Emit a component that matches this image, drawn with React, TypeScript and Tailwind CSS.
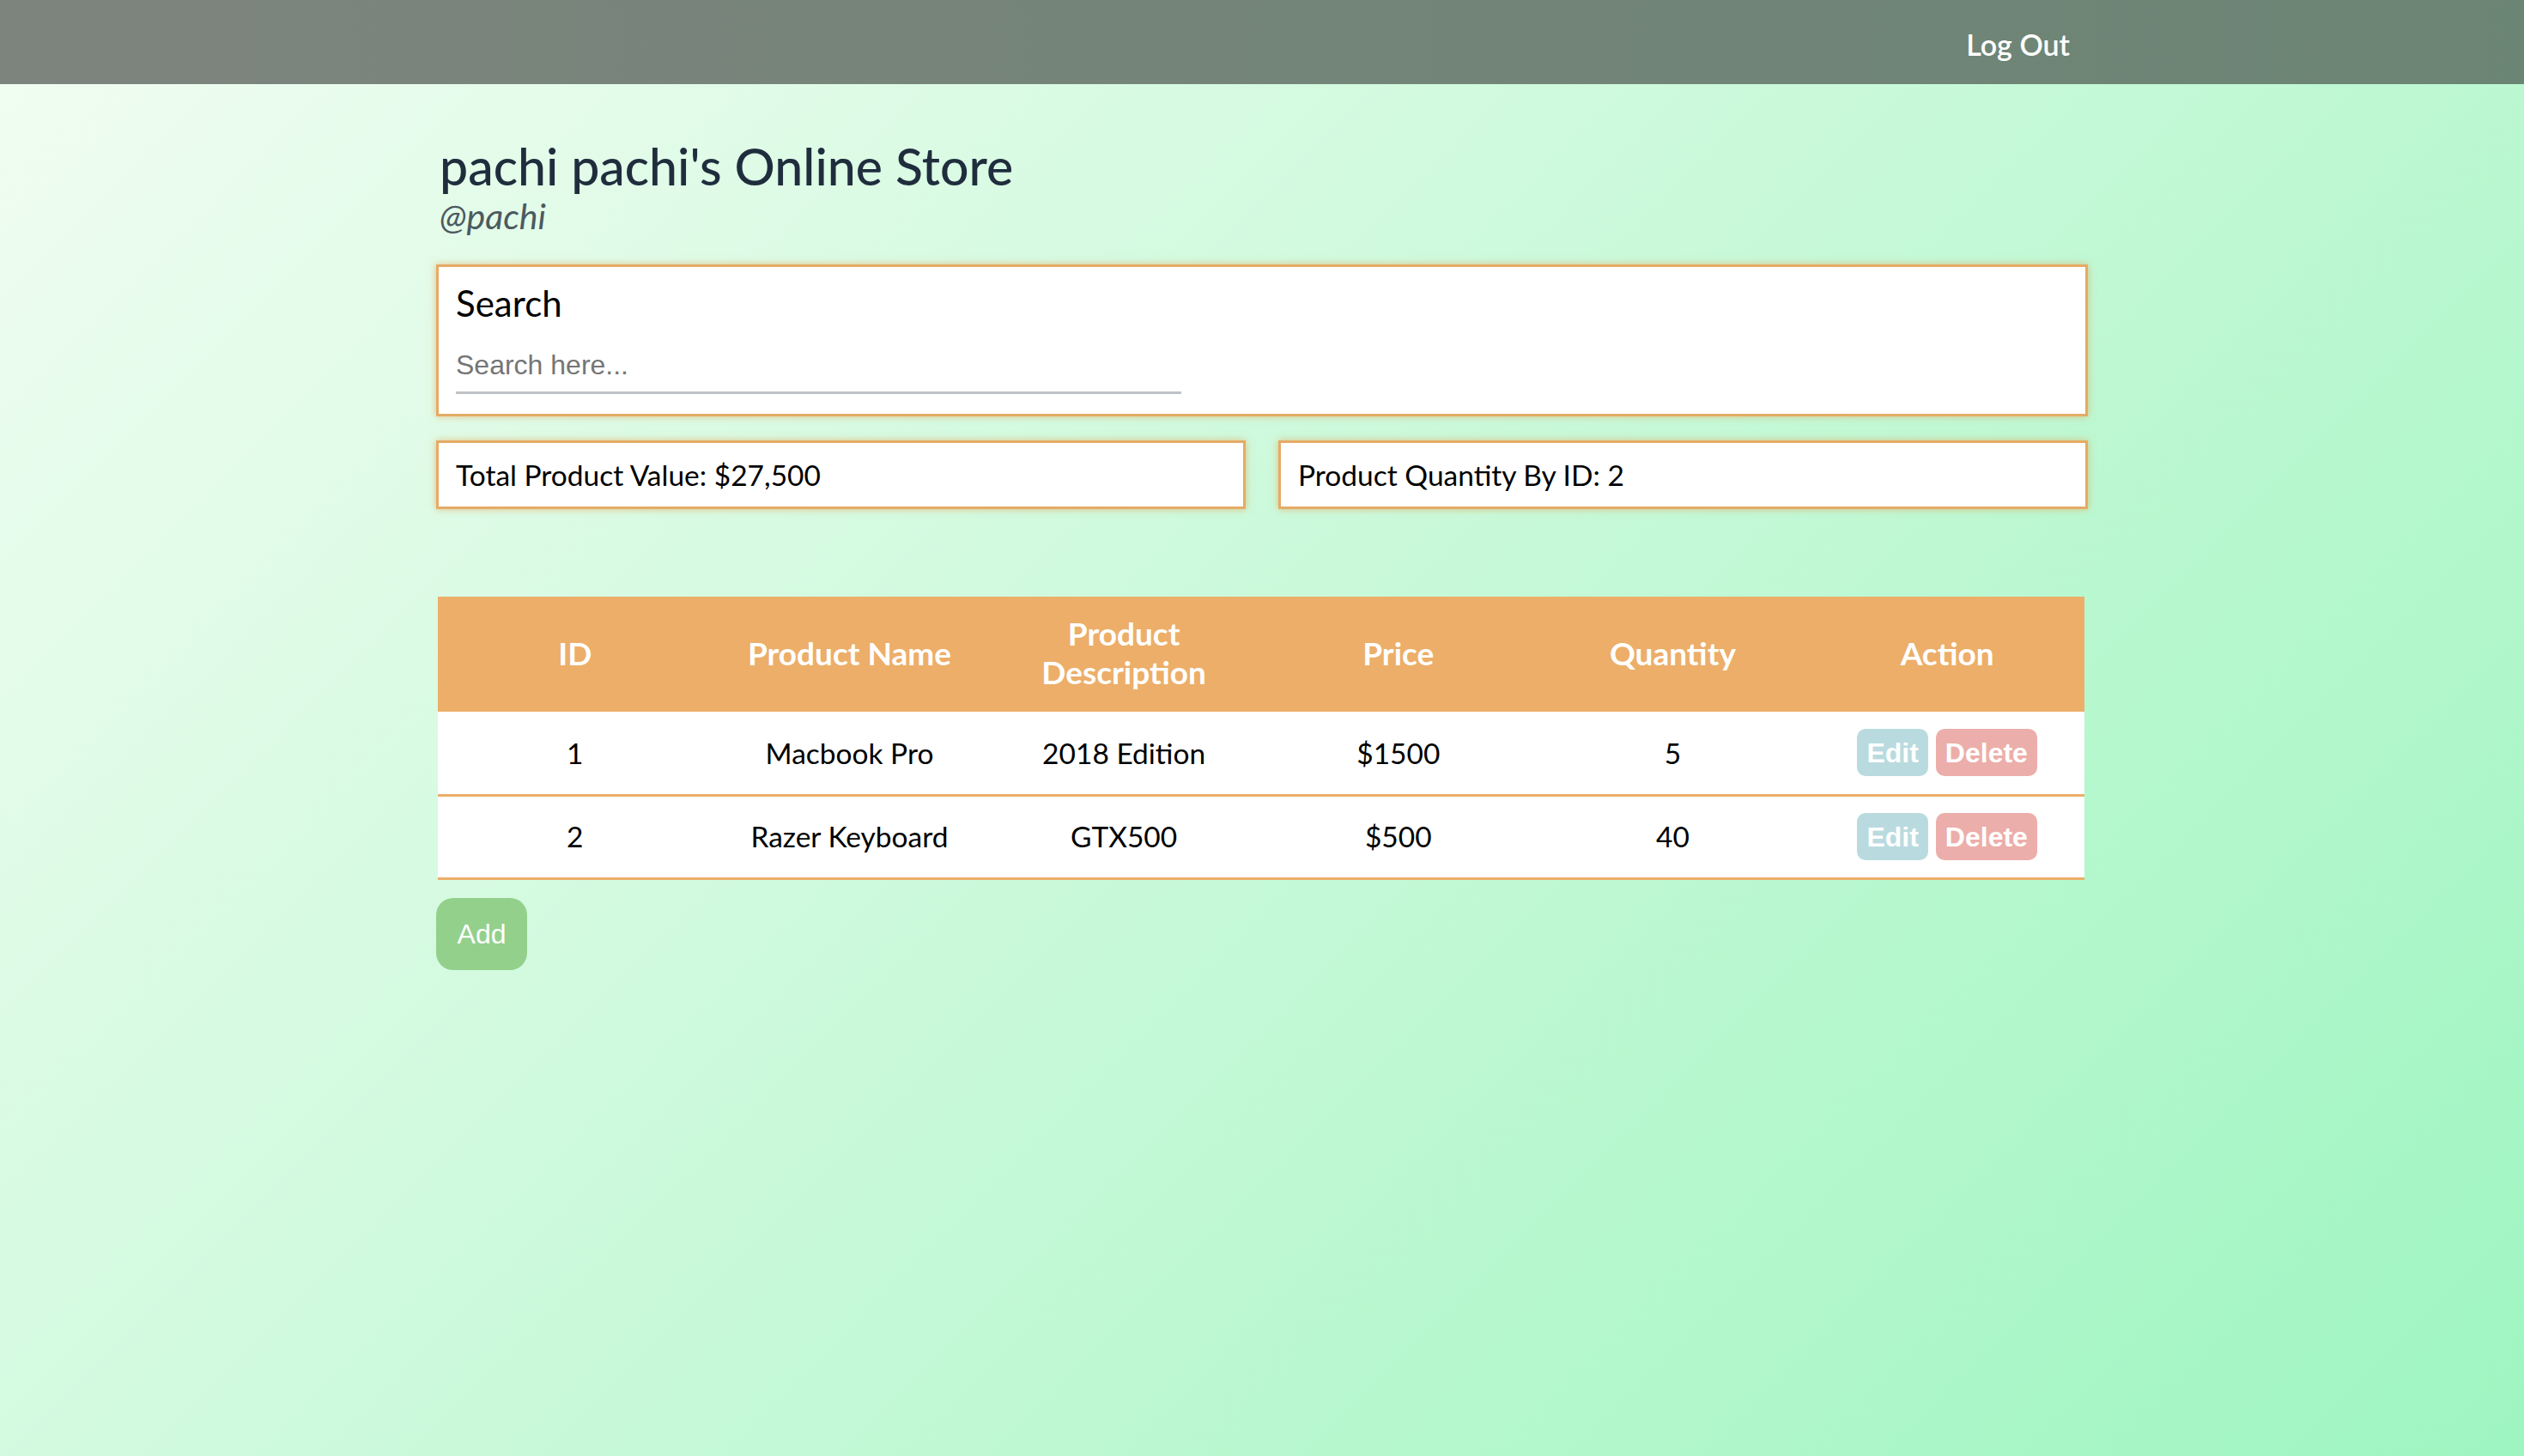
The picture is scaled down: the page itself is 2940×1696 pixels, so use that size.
import { useState } from "react";

type Product = {
  id: number;
  name: string;
  description: string;
  price: number;
  quantity: number;
};

const products: Product[] = [
  { id: 1, name: "Macbook Pro", description: "2018 Edition", price: 1500, quantity: 5 },
  { id: 2, name: "Razer Keyboard", description: "GTX500", price: 500, quantity: 40 },
];

export default function App() {
  const [search, setSearch] = useState("");
  const total = products.reduce((sum, p) => sum + p.price * p.quantity, 0);

  return (
    <div className="min-h-screen bg-[linear-gradient(135deg,#f2fdf2,#9ef5c0)] font-['Lato',sans-serif]">
      <nav className="h-[98px] flex items-center bg-[linear-gradient(90deg,#7d847e,#6b8574)]">
        <div className="w-[1924px] mx-auto flex justify-end pr-[21px] pt-[4px]">
          <button className="text-white text-[34px] font-semibold">Log Out</button>
        </div>
      </nav>

      <main className="w-[1924px] mx-auto pt-[60px]">
        <h1 className="ml-[4px] text-[59px] leading-[72px] font-medium text-[#1f2d3d]">pachi pachi's Online Store</h1>
        <p className="ml-[4px] text-[41px] leading-[43px] italic text-[#4b5a60]">@pachi</p>

        {/* search */}
        <div className="mt-[35px] bg-white border-[3px] border-[#e5ab66] shadow-[0_0_8px_rgba(229,166,90,0.7)] px-[20px] pt-[18px] pb-[23px]">
          <div className="text-[42px] leading-[48px] text-black">Search</div>
          <input
            value={search}
            onChange={(e) => setSearch(e.target.value)}
            placeholder="Search here..."
            className="mt-[18px] w-[845px] h-[64px] border-b-[3px] border-[#bfc2c6] outline-none font-['Liberation_Sans',sans-serif] text-[32px] text-black placeholder:text-[#757575]"
          />
        </div>

        {/* stats */}
        <div className="mt-[28px] flex gap-[38px]">
          <div className="flex-1 h-[80px] flex items-center bg-white border-[3px] border-[#e5ab66] shadow-[0_0_8px_rgba(229,166,90,0.7)] px-[20px] text-[33.5px] text-black">
            Total Product Value: ${total.toLocaleString("en-US")}
          </div>
          <div className="flex-1 h-[80px] flex items-center bg-white border-[3px] border-[#e5ab66] shadow-[0_0_8px_rgba(229,166,90,0.7)] px-[20px] text-[33.5px] text-black">
            Product Quantity By ID: {products.length}
          </div>
        </div>

        {/* table */}
        <table className="mt-[102px] ml-[2px] w-[1918px] table-fixed border-collapse text-center">
          <thead className="bg-[#ecae69] text-white">
            <tr className="h-[134px] text-[37px] leading-[45px] font-semibold">
              <th className="pb-[4px]">ID</th>
              <th className="pb-[4px]">Product Name</th>
              <th className="pb-[4px]">
                Product
                <br />
                Description
              </th>
              <th className="pb-[4px]">Price</th>
              <th className="pb-[4px]">Quantity</th>
              <th className="pb-[4px]">Action</th>
            </tr>
          </thead>
          <tbody className="bg-white text-black text-[33.5px]">
            {products.map((p) => (
              <tr key={p.id} className="h-[97px] border-b-[3px] border-[#ecae69]">
                <td>{p.id}</td>
                <td>{p.name}</td>
                <td>{p.description}</td>
                <td>${p.price}</td>
                <td>{p.quantity}</td>
                <td>
                  <div className="flex justify-center gap-[9px] font-['Liberation_Sans',sans-serif] font-bold">
                    <button className="h-[55px] px-[11px] rounded-[10px] bg-[#b9dbdf] text-white text-[32px]">Edit</button>
                    <button className="h-[55px] px-[11px] rounded-[10px] bg-[#ecaeaa] text-white text-[32px]">Delete</button>
                  </div>
                </td>
              </tr>
            ))}
          </tbody>
        </table>

        <button className="mt-[21px] w-[106px] h-[84px] rounded-[20px] bg-[#93d08c] text-white text-[32px] font-['Liberation_Sans',sans-serif]">
          Add
        </button>
      </main>
    </div>
  );
}
